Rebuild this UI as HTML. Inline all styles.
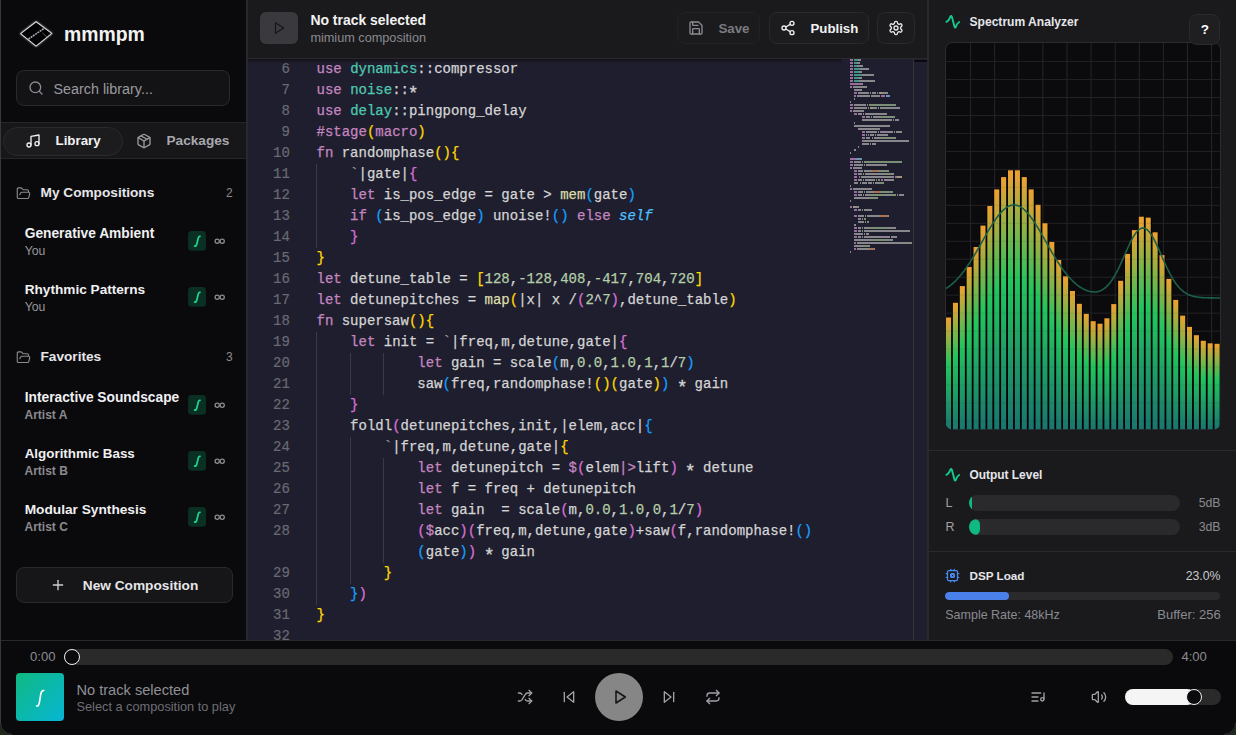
<!DOCTYPE html>
<html><head><meta charset="utf-8">
<style>
*{box-sizing:border-box;margin:0;padding:0}
html,body{width:1236px;height:735px;overflow:hidden;background:#0b0b0d;font-family:"Liberation Sans",sans-serif;}
.abs{position:absolute}
svg.i{position:absolute;fill:none;stroke:currentColor;stroke-width:2;stroke-linecap:round;stroke-linejoin:round}
#side{position:absolute;left:0;top:0;width:248px;height:640px;background:#0a0a0c;border-right:2px solid #29292c}
.t{position:absolute;white-space:nowrap;line-height:1}
#hdr{position:absolute;left:248px;top:0;width:680px;height:59px;background:#1a1a1c;border-bottom:1px solid #2a2a2d}
#code{position:absolute;left:248px;top:59px;width:680px;height:581px;background:#1e1e2e;overflow:hidden}
.ln{position:absolute;left:0;width:41.8px;text-align:right;font-family:"Liberation Mono",monospace;font-size:14px;line-height:21px;height:21px;color:#6a6a72;white-space:pre;-webkit-text-stroke:0.2px currentColor}
.cl{position:absolute;left:68.5px;font-family:"Liberation Mono",monospace;font-size:14px;line-height:21px;height:21px;color:#d4d4d4;white-space:pre;-webkit-text-stroke:0.25px currentColor}
.guide{position:absolute;width:1px;background:#3a3a46}
#right{position:absolute;left:928px;top:0;width:308px;height:640px;background:#1a1a1d}
#player{position:absolute;left:0;top:640px;width:1236px;height:95px;background:#0a0a0c;border-top:1px solid #2a2a2d}
.btn{position:absolute;border:1px solid #2a2a2d;border-radius:8px;background:#1c1c1f}
.badge{position:absolute;width:18px;height:20px;border-radius:4px;background:#0f3325;color:#22c55e;font-size:13px;text-align:center;line-height:20px;font-style:italic}
.inf{position:absolute;color:#8a8a8e;font-size:15px;line-height:1}
</style></head><body>

<!-- SIDEBAR -->
<div id="side">
  <svg class="abs" style="left:16px;top:16px" width="42" height="36" viewBox="16 16 42 36"><polygon points="20.6,33.6 36.1,21.8 51.8,33.4 36.1,46.1" fill="#000" stroke="#d8d8d8" stroke-width="1.1" stroke-linejoin="round" style="filter:drop-shadow(0 0 1px #999)"/><line x1="28.5" y1="39" x2="44.4" y2="28.2" stroke="#aab" stroke-width="1.6" stroke-dasharray="2 0.7"/><line x1="42.4" y1="32.9" x2="46.6" y2="36.6" stroke="#888" stroke-width="0.7"/></svg>
  <div class="t" style="left:64px;top:24.6px;font-size:19.4px;font-weight:bold;color:#f2f2f2">mmmpm</div>

  <div class="abs" style="left:16px;top:70px;width:214px;height:36px;border:1px solid #2a2a2d;border-radius:8px;background:#131315"></div>
  <svg class="i" style="left:28.3px;top:80.3px;color:#8c8a94" width="16" height="16" viewBox="0 0 24 24"><circle cx="11" cy="11" r="8"/><path d="m21 21-4.3-4.3"/></svg>
  <div class="t" style="left:53.5px;top:82.2px;font-size:14.35px;color:#9a9aa0">Search library...</div>

  <div class="abs" style="left:0;top:122px;width:246px;height:37px;background:#17171a;border-top:1px solid #26262a;border-bottom:1px solid #26262a"></div>
  <div class="abs" style="left:3px;top:127px;width:120px;height:29px;border:1px solid #2a2a2d;border-radius:15px;background:#1c1c1f"></div>
  <svg class="i" style="left:25px;top:133px;color:#f0f0f0" width="16" height="16" viewBox="0 0 24 24"><path d="M9 18V5l12-2v13"/><circle cx="6" cy="18" r="3"/><circle cx="18" cy="16" r="3"/></svg>
  <div class="t" style="left:55.5px;top:134.4px;font-size:13.33px;font-weight:bold;color:#f2f2f2">Library</div>
  <svg class="i" style="left:136px;top:133px;color:#9a9aa0" width="16" height="16" viewBox="0 0 24 24"><path d="M21 8a2 2 0 0 0-1-1.73l-7-4a2 2 0 0 0-2 0l-7 4A2 2 0 0 0 3 8v8a2 2 0 0 0 1 1.73l7 4a2 2 0 0 0 2 0l7-4A2 2 0 0 0 21 16Z"/><path d="m3.3 7 8.7 5 8.7-5"/><path d="M12 22V12"/><path d="m7.5 4.27 9 5.15"/></svg>
  <div class="t" style="left:166.5px;top:134.2px;font-size:13.63px;font-weight:bold;color:#a8a8ae">Packages</div>

  <svg class="i" style="left:16.2px;top:185.5px;color:#8a8a90;stroke-width:1.8" width="15" height="15" viewBox="0 0 24 24"><path d="m6 14 1.5-2.9A2 2 0 0 1 9.24 10H20a2 2 0 0 1 1.94 2.5l-1.54 6a2 2 0 0 1-1.95 1.5H4a2 2 0 0 1-2-2V5a2 2 0 0 1 2-2h3.9a2 2 0 0 1 1.69.9l.81 1.2a2 2 0 0 0 1.67.9H18a2 2 0 0 1 2 2v2"/></svg>
  <div class="t" style="left:40.5px;top:186.4px;font-size:13.66px;font-weight:bold;color:#e6e6ea">My Compositions</div>
  <div class="t" style="left:226px;top:187px;font-size:12px;color:#8a8a90">2</div>

  <div class="t" style="left:24.7px;top:226.8px;font-size:13.77px;font-weight:bold;color:#f0f0f2">Generative Ambient</div>
  <div class="t" style="left:24.7px;top:245.2px;font-size:12.27px;color:#96969c">You</div>
  <svg class="abs" style="left:186px;top:229px" width="42" height="24" viewBox="186 229 42 24"><rect x="188.1" y="231.1" width="17.9" height="19.6" rx="3.5" fill="#0a2f23"/><path d="M194.6 246.2 Q196.4 246.4 197.1 243 L198.2 238.2 Q198.7 236.2 200 236.4" fill="none" stroke="#1ed48f" stroke-width="1.7" stroke-linecap="round"/><circle cx="217.2" cy="241.2" r="2.1" fill="none" stroke="#8c8c92" stroke-width="1.25"/><circle cx="222.2" cy="241.2" r="2.1" fill="none" stroke="#8c8c92" stroke-width="1.25"/></svg>

  <div class="t" style="left:24.7px;top:282.8px;font-size:13.64px;font-weight:bold;color:#f0f0f2">Rhythmic Patterns</div>
  <div class="t" style="left:24.7px;top:301.2px;font-size:12.27px;color:#96969c">You</div>
  <svg class="abs" style="left:186px;top:285px" width="42" height="24" viewBox="186 229 42 24"><rect x="188.1" y="231.1" width="17.9" height="19.6" rx="3.5" fill="#0a2f23"/><path d="M194.6 246.2 Q196.4 246.4 197.1 243 L198.2 238.2 Q198.7 236.2 200 236.4" fill="none" stroke="#1ed48f" stroke-width="1.7" stroke-linecap="round"/><circle cx="217.2" cy="241.2" r="2.1" fill="none" stroke="#8c8c92" stroke-width="1.25"/><circle cx="222.2" cy="241.2" r="2.1" fill="none" stroke="#8c8c92" stroke-width="1.25"/></svg>

  <svg class="i" style="left:16.2px;top:349.5px;color:#8a8a90;stroke-width:1.8" width="15" height="15" viewBox="0 0 24 24"><path d="m6 14 1.5-2.9A2 2 0 0 1 9.24 10H20a2 2 0 0 1 1.94 2.5l-1.54 6a2 2 0 0 1-1.95 1.5H4a2 2 0 0 1-2-2V5a2 2 0 0 1 2-2h3.9a2 2 0 0 1 1.69.9l.81 1.2a2 2 0 0 0 1.67.9H18a2 2 0 0 1 2 2v2"/></svg>
  <div class="t" style="left:40.5px;top:350.4px;font-size:13.66px;font-weight:bold;color:#e6e6ea">Favorites</div>
  <div class="t" style="left:226px;top:351px;font-size:12px;color:#8a8a90">3</div>

  <div class="t" style="left:24.7px;top:390.8px;font-size:13.78px;font-weight:bold;color:#f0f0f2">Interactive Soundscape</div>
  <div class="t" style="left:24.5px;top:409.4px;font-size:12px;font-weight:bold;color:#8a8a90">Artist A</div>
  <svg class="abs" style="left:186px;top:393px" width="42" height="24" viewBox="186 229 42 24"><rect x="188.1" y="231.1" width="17.9" height="19.6" rx="3.5" fill="#0a2f23"/><path d="M194.6 246.2 Q196.4 246.4 197.1 243 L198.2 238.2 Q198.7 236.2 200 236.4" fill="none" stroke="#1ed48f" stroke-width="1.7" stroke-linecap="round"/><circle cx="217.2" cy="241.2" r="2.1" fill="none" stroke="#8c8c92" stroke-width="1.25"/><circle cx="222.2" cy="241.2" r="2.1" fill="none" stroke="#8c8c92" stroke-width="1.25"/></svg>

  <div class="t" style="left:24.7px;top:446.8px;font-size:13.4px;font-weight:bold;color:#f0f0f2">Algorithmic Bass</div>
  <div class="t" style="left:24.5px;top:465.4px;font-size:12px;font-weight:bold;color:#8a8a90">Artist B</div>
  <svg class="abs" style="left:186px;top:449px" width="42" height="24" viewBox="186 229 42 24"><rect x="188.1" y="231.1" width="17.9" height="19.6" rx="3.5" fill="#0a2f23"/><path d="M194.6 246.2 Q196.4 246.4 197.1 243 L198.2 238.2 Q198.7 236.2 200 236.4" fill="none" stroke="#1ed48f" stroke-width="1.7" stroke-linecap="round"/><circle cx="217.2" cy="241.2" r="2.1" fill="none" stroke="#8c8c92" stroke-width="1.25"/><circle cx="222.2" cy="241.2" r="2.1" fill="none" stroke="#8c8c92" stroke-width="1.25"/></svg>

  <div class="t" style="left:24.7px;top:502.8px;font-size:13.69px;font-weight:bold;color:#f0f0f2">Modular Synthesis</div>
  <div class="t" style="left:24.5px;top:521.4px;font-size:12px;font-weight:bold;color:#8a8a90">Artist C</div>
  <svg class="abs" style="left:186px;top:505px" width="42" height="24" viewBox="186 229 42 24"><rect x="188.1" y="231.1" width="17.9" height="19.6" rx="3.5" fill="#0a2f23"/><path d="M194.6 246.2 Q196.4 246.4 197.1 243 L198.2 238.2 Q198.7 236.2 200 236.4" fill="none" stroke="#1ed48f" stroke-width="1.7" stroke-linecap="round"/><circle cx="217.2" cy="241.2" r="2.1" fill="none" stroke="#8c8c92" stroke-width="1.25"/><circle cx="222.2" cy="241.2" r="2.1" fill="none" stroke="#8c8c92" stroke-width="1.25"/></svg>

  <div class="abs" style="left:16px;top:567px;width:217px;height:36px;border:1px solid #2a2a2d;border-radius:8px;background:#161618"></div>
  <svg class="i" style="left:50px;top:577px;color:#d0d0d4" width="16" height="16" viewBox="0 0 24 24"><path d="M5 12h14"/><path d="M12 5v14"/></svg>
  <div class="t" style="left:82.8px;top:578.8px;font-size:13.68px;font-weight:bold;color:#e6e6ea">New Composition</div>
</div>

<!-- HEADER -->
<div id="hdr">
  <div class="abs" style="left:12px;top:12px;width:38px;height:32px;border-radius:6px;background:#3a3a3e"></div>
  <svg class="i" style="left:24px;top:21px;color:#151517" width="14" height="14" viewBox="0 0 24 24"><polygon points="6 3 20 12 6 21 6 3"/></svg>
  <div class="t" style="left:62.4px;top:14px;font-size:13.96px;font-weight:bold;color:#f2f2f2">No track selected</div>
  <div class="t" style="left:62.4px;top:31.7px;font-size:12.69px;color:#8a8a90">mimium composition</div>

  <div class="btn" style="left:429px;top:12px;width:83px;height:32px;opacity:0.5"></div>
  <svg class="i" style="left:440px;top:20px;color:#8a8a90" width="16" height="16" viewBox="0 0 24 24"><path d="M15.2 3a2 2 0 0 1 1.4.6l3.8 3.8a2 2 0 0 1 .6 1.4V19a2 2 0 0 1-2 2H5a2 2 0 0 1-2-2V5a2 2 0 0 1 2-2z"/><path d="M17 21v-7a1 1 0 0 0-1-1H8a1 1 0 0 0-1 1v7"/><path d="M7 3v4a1 1 0 0 0 1 1h7"/></svg>
  <div class="t" style="left:470.4px;top:21.8px;font-size:13.32px;font-weight:bold;color:#7a7a80">Save</div>

  <div class="btn" style="left:521px;top:12px;width:100px;height:32px"></div>
  <svg class="i" style="left:532px;top:20px;color:#f0f0f0" width="16" height="16" viewBox="0 0 24 24"><circle cx="18" cy="5" r="3"/><circle cx="6" cy="12" r="3"/><circle cx="18" cy="19" r="3"/><line x1="8.59" x2="15.42" y1="13.51" y2="17.49"/><line x1="15.41" x2="8.59" y1="6.51" y2="10.49"/></svg>
  <div class="t" style="left:562.5px;top:21.8px;font-size:13.24px;font-weight:bold;color:#f2f2f2">Publish</div>

  <div class="btn" style="left:629px;top:12px;width:38px;height:32px"></div>
  <svg class="i" style="left:640px;top:20px;color:#e8e8ea" width="16" height="16" viewBox="0 0 24 24"><path d="M12.22 2h-.44a2 2 0 0 0-2 2v.18a2 2 0 0 1-1 1.73l-.43.25a2 2 0 0 1-2 0l-.15-.08a2 2 0 0 0-2.73.73l-.22.38a2 2 0 0 0 .73 2.73l.15.1a2 2 0 0 1 1 1.72v.51a2 2 0 0 1-1 1.74l-.15.09a2 2 0 0 0-.73 2.730l.22.38a2 2 0 0 0 2.73.73l.15-.08a2 2 0 0 1 2 0l.43.25a2 2 0 0 1 1 1.73V20a2 2 0 0 0 2 2h.44a2 2 0 0 0 2-2v-.18a2 2 0 0 1 1-1.73l.43-.25a2 2 0 0 1 2 0l.15.08a2 2 0 0 0 2.73-.73l.22-.39a2 2 0 0 0-.73-2.73l-.15-.08a2 2 0 0 1-1-1.74v-.5a2 2 0 0 1 1-1.74l.15-.09a2 2 0 0 0 .73-2.73l-.22-.38a2 2 0 0 0-2.73-.73l-.15.08a2 2 0 0 1-2 0l-.43-.25a2 2 0 0 1-1-1.73V4a2 2 0 0 0-2-2z"/><circle cx="12" cy="12" r="3"/></svg>
</div>

<!-- CODE -->
<div id="code">
  <div style="position:absolute;left:0;top:-59px;width:680px;height:640px">
<div class="ln" style="top:58.5px">6</div><div class="cl" style="top:58.5px"><span style="color:#c586c0">use</span><span style="color:#d4d4d4"> </span><span style="color:#4ec9b0">dynamics</span><span style="color:#d4d4d4">::compressor</span></div>
<div class="ln" style="top:79.5px">7</div><div class="cl" style="top:79.5px"><span style="color:#c586c0">use</span><span style="color:#d4d4d4"> </span><span style="color:#4ec9b0">noise</span><span style="color:#d4d4d4">::<span style="display:inline-block;transform:translateY(4px) scale(1.3)">*</span></span></div>
<div class="ln" style="top:100.5px">8</div><div class="cl" style="top:100.5px"><span style="color:#c586c0">use</span><span style="color:#d4d4d4"> </span><span style="color:#4ec9b0">delay</span><span style="color:#d4d4d4">::pingpong_delay</span></div>
<div class="ln" style="top:121.5px">9</div><div class="cl" style="top:121.5px"><span style="color:#c586c0">#stage</span><span style="color:#ffd700">(</span><span style="color:#c586c0">macro</span><span style="color:#ffd700">)</span></div>
<div class="ln" style="top:142.5px">10</div><div class="cl" style="top:142.5px"><span style="color:#c586c0">fn</span><span style="color:#d4d4d4"> randomphase</span><span style="color:#ffd700">()</span><span style="color:#ffd700">{</span></div>
<div class="ln" style="top:163.5px">11</div><div class="cl" style="top:163.5px"><span style="color:#d4d4d4">    </span><span style="color:#9a9a9a">`</span><span style="color:#d4d4d4">|gate|</span><span style="color:#da70d6">{</span></div>
<div class="ln" style="top:184.5px">12</div><div class="cl" style="top:184.5px"><span style="color:#d4d4d4">    </span><span style="color:#c586c0">let</span><span style="color:#d4d4d4"> is_pos_edge = gate &gt; </span><span style="color:#dcdcaa">mem</span><span style="color:#179fff">(</span><span style="color:#d4d4d4">gate</span><span style="color:#179fff">)</span></div>
<div class="ln" style="top:205.5px">13</div><div class="cl" style="top:205.5px"><span style="color:#d4d4d4">    </span><span style="color:#c586c0">if</span><span style="color:#d4d4d4"> </span><span style="color:#179fff">(</span><span style="color:#d4d4d4">is_pos_edge</span><span style="color:#179fff">)</span><span style="color:#d4d4d4"> unoise!</span><span style="color:#179fff">()</span><span style="color:#d4d4d4"> </span><span style="color:#c586c0">else</span><span style="color:#d4d4d4"> </span><span style="color:#4fc1ff;font-style:italic">self</span></div>
<div class="ln" style="top:226.5px">14</div><div class="cl" style="top:226.5px"><span style="color:#d4d4d4">    </span><span style="color:#da70d6">}</span></div>
<div class="ln" style="top:247.5px">15</div><div class="cl" style="top:247.5px"><span style="color:#ffd700">}</span></div>
<div class="ln" style="top:268.5px">16</div><div class="cl" style="top:268.5px"><span style="color:#c586c0">let</span><span style="color:#d4d4d4"> detune_table = </span><span style="color:#ffd700">[</span><span style="color:#b5cea8">128</span><span style="color:#d4d4d4">,</span><span style="color:#b5cea8">-128</span><span style="color:#d4d4d4">,</span><span style="color:#b5cea8">408</span><span style="color:#d4d4d4">,</span><span style="color:#b5cea8">-417</span><span style="color:#d4d4d4">,</span><span style="color:#b5cea8">704</span><span style="color:#d4d4d4">,</span><span style="color:#b5cea8">720</span><span style="color:#ffd700">]</span></div>
<div class="ln" style="top:289.5px">17</div><div class="cl" style="top:289.5px"><span style="color:#c586c0">let</span><span style="color:#d4d4d4"> detunepitches = </span><span style="color:#dcdcaa">map</span><span style="color:#ffd700">(</span><span style="color:#d4d4d4">|x| x /</span><span style="color:#da70d6">(</span><span style="color:#b5cea8">2</span><span style="color:#d4d4d4">^</span><span style="color:#b5cea8">7</span><span style="color:#da70d6">)</span><span style="color:#d4d4d4">,detune_table</span><span style="color:#ffd700">)</span></div>
<div class="ln" style="top:310.5px">18</div><div class="cl" style="top:310.5px"><span style="color:#c586c0">fn</span><span style="color:#d4d4d4"> supersaw</span><span style="color:#ffd700">()</span><span style="color:#ffd700">{</span></div>
<div class="ln" style="top:331.5px">19</div><div class="cl" style="top:331.5px"><span style="color:#d4d4d4">    </span><span style="color:#c586c0">let</span><span style="color:#d4d4d4"> init = </span><span style="color:#9a9a9a">`</span><span style="color:#d4d4d4">|freq,m,detune,gate|</span><span style="color:#da70d6">{</span></div>
<div class="ln" style="top:352.5px">20</div><div class="cl" style="top:352.5px"><span style="color:#d4d4d4">            </span><span style="color:#c586c0">let</span><span style="color:#d4d4d4"> gain = scale</span><span style="color:#179fff">(</span><span style="color:#d4d4d4">m,</span><span style="color:#b5cea8">0.0</span><span style="color:#d4d4d4">,</span><span style="color:#b5cea8">1.0</span><span style="color:#d4d4d4">,</span><span style="color:#b5cea8">1</span><span style="color:#d4d4d4">,</span><span style="color:#b5cea8">1</span><span style="color:#d4d4d4">/</span><span style="color:#b5cea8">7</span><span style="color:#179fff">)</span></div>
<div class="ln" style="top:373.5px">21</div><div class="cl" style="top:373.5px"><span style="color:#d4d4d4">            saw</span><span style="color:#179fff">(</span><span style="color:#d4d4d4">freq,randomphase!</span><span style="color:#ffd700">()</span><span style="color:#ffd700">(</span><span style="color:#d4d4d4">gate</span><span style="color:#ffd700">)</span><span style="color:#179fff">)</span><span style="color:#d4d4d4"> <span style="display:inline-block;transform:translateY(4px) scale(1.3)">*</span> gain</span></div>
<div class="ln" style="top:394.5px">22</div><div class="cl" style="top:394.5px"><span style="color:#d4d4d4">    </span><span style="color:#da70d6">}</span></div>
<div class="ln" style="top:415.5px">23</div><div class="cl" style="top:415.5px"><span style="color:#d4d4d4">    foldl</span><span style="color:#da70d6">(</span><span style="color:#d4d4d4">detunepitches,init,|elem,acc|</span><span style="color:#179fff">{</span></div>
<div class="ln" style="top:436.5px">24</div><div class="cl" style="top:436.5px"><span style="color:#d4d4d4">        </span><span style="color:#9a9a9a">`</span><span style="color:#d4d4d4">|freq,m,detune,gate|</span><span style="color:#ffd700">{</span></div>
<div class="ln" style="top:457.5px">25</div><div class="cl" style="top:457.5px"><span style="color:#d4d4d4">            </span><span style="color:#c586c0">let</span><span style="color:#d4d4d4"> detunepitch = </span><span style="color:#c586c0">$</span><span style="color:#da70d6">(</span><span style="color:#d4d4d4">elem</span><span style="color:#c586c0">|&gt;</span><span style="color:#d4d4d4">lift</span><span style="color:#da70d6">)</span><span style="color:#d4d4d4"> <span style="display:inline-block;transform:translateY(4px) scale(1.3)">*</span> detune</span></div>
<div class="ln" style="top:478.5px">26</div><div class="cl" style="top:478.5px"><span style="color:#d4d4d4">            </span><span style="color:#c586c0">let</span><span style="color:#d4d4d4"> f = freq + detunepitch</span></div>
<div class="ln" style="top:499.5px">27</div><div class="cl" style="top:499.5px"><span style="color:#d4d4d4">            </span><span style="color:#c586c0">let</span><span style="color:#d4d4d4"> gain  = scale</span><span style="color:#da70d6">(</span><span style="color:#d4d4d4">m,</span><span style="color:#b5cea8">0.0</span><span style="color:#d4d4d4">,</span><span style="color:#b5cea8">1.0</span><span style="color:#d4d4d4">,</span><span style="color:#b5cea8">0</span><span style="color:#d4d4d4">,</span><span style="color:#b5cea8">1</span><span style="color:#d4d4d4">/</span><span style="color:#b5cea8">7</span><span style="color:#da70d6">)</span></div>
<div class="ln" style="top:520.5px">28</div><div class="cl" style="top:520.5px"><span style="color:#d4d4d4">            </span><span style="color:#da70d6">(</span><span style="color:#c586c0">$</span><span style="color:#d4d4d4">acc</span><span style="color:#da70d6">)</span><span style="color:#da70d6">(</span><span style="color:#d4d4d4">freq,m,detune,gate</span><span style="color:#da70d6">)</span><span style="color:#d4d4d4">+saw</span><span style="color:#da70d6">(</span><span style="color:#d4d4d4">f,randomphase!</span><span style="color:#179fff">()</span></div>
<div class="ln" style="top:541.5px"></div><div class="cl" style="top:541.5px"><span style="color:#d4d4d4">            </span><span style="color:#179fff">(</span><span style="color:#d4d4d4">gate</span><span style="color:#179fff">)</span><span style="color:#da70d6">)</span><span style="color:#d4d4d4"> <span style="display:inline-block;transform:translateY(4px) scale(1.3)">*</span> gain</span></div>
<div class="ln" style="top:562.5px">29</div><div class="cl" style="top:562.5px"><span style="color:#d4d4d4">        </span><span style="color:#ffd700">}</span></div>
<div class="ln" style="top:583.5px">30</div><div class="cl" style="top:583.5px"><span style="color:#d4d4d4">    </span><span style="color:#179fff">}</span><span style="color:#da70d6">)</span></div>
<div class="ln" style="top:604.5px">31</div><div class="cl" style="top:604.5px"><span style="color:#ffd700">}</span></div>
<div class="ln" style="top:625.5px">32</div><div class="cl" style="top:625.5px"></div>
  <div class="guide" style="left:68px;top:163.5px;height:84px"></div>
  <div class="guide" style="left:68px;top:331.5px;height:273px"></div>
  <div class="guide" style="left:102px;top:352.5px;height:42px"></div>
  <div class="guide" style="left:135px;top:352.5px;height:42px"></div>
  <div class="guide" style="left:102px;top:436.5px;height:147px"></div>
  <div class="guide" style="left:135px;top:457.5px;height:105px"></div>
  </div>
  <div class="abs" style="left:0;top:0;width:594px;height:5px;background:linear-gradient(#13121b,rgba(30,30,46,0))"></div>
  <div class="abs" style="left:665px;top:0;width:1px;height:582px;background:#34343f"></div>
  <div class="abs" style="left:666px;top:1px;width:13px;height:2px;background:#0a0a0e"></div>
<svg width="70" height="200" style="position:absolute;left:602px;top:0px" viewBox="0 0 70 200">
<rect x="0" y="0" width="3" height="2" fill="#9a6fa0"/>
<rect x="4" y="0" width="4" height="2" fill="#3f9484"/>
<rect x="8" y="0" width="3" height="2" fill="#88888c"/>
<rect x="0" y="3" width="3" height="2" fill="#9a6fa0"/>
<rect x="4" y="3" width="3" height="2" fill="#3f9484"/>
<rect x="7" y="3" width="3" height="2" fill="#88888c"/>
<rect x="0" y="6" width="3" height="2" fill="#9a6fa0"/>
<rect x="4" y="6" width="3" height="2" fill="#3f9484"/>
<rect x="7" y="6" width="6" height="2" fill="#88888c"/>
<rect x="0" y="9" width="3" height="2" fill="#9a6fa0"/>
<rect x="4" y="9" width="6" height="2" fill="#3f9484"/>
<rect x="10" y="9" width="9" height="2" fill="#88888c"/>
<rect x="0" y="12" width="3" height="2" fill="#9a6fa0"/>
<rect x="4" y="12" width="5" height="2" fill="#3f9484"/>
<rect x="9" y="12" width="3" height="2" fill="#88888c"/>
<rect x="0" y="15" width="3" height="2" fill="#9a6fa0"/>
<rect x="4" y="15" width="8" height="2" fill="#3f9484"/>
<rect x="12" y="15" width="12" height="2" fill="#88888c"/>
<rect x="0" y="18" width="3" height="2" fill="#9a6fa0"/>
<rect x="4" y="18" width="5" height="2" fill="#3f9484"/>
<rect x="9" y="18" width="3" height="2" fill="#88888c"/>
<rect x="0" y="21" width="3" height="2" fill="#9a6fa0"/>
<rect x="4" y="21" width="5" height="2" fill="#3f9484"/>
<rect x="9" y="21" width="16" height="2" fill="#88888c"/>
<rect x="0" y="24" width="6" height="2" fill="#9a6fa0"/>
<rect x="6" y="24" width="1" height="2" fill="#88888c"/>
<rect x="7" y="24" width="5" height="2" fill="#9a6fa0"/>
<rect x="12" y="24" width="1" height="2" fill="#88888c"/>
<rect x="0" y="27" width="2" height="2" fill="#9a6fa0"/>
<rect x="3" y="27" width="14" height="2" fill="#88888c"/>
<rect x="4" y="30" width="1" height="2" fill="#9a6fa0"/>
<rect x="5" y="30" width="7" height="2" fill="#88888c"/>
<rect x="4" y="33" width="3" height="2" fill="#9a6fa0"/>
<rect x="8" y="33" width="11" height="2" fill="#88888c"/>
<rect x="20" y="33" width="1" height="2" fill="#88888c"/>
<rect x="22" y="33" width="4" height="2" fill="#88888c"/>
<rect x="27" y="33" width="1" height="2" fill="#88888c"/>
<rect x="29" y="33" width="3" height="2" fill="#9c9c70"/>
<rect x="32" y="33" width="6" height="2" fill="#88888c"/>
<rect x="4" y="36" width="2" height="2" fill="#9a6fa0"/>
<rect x="7" y="36" width="13" height="2" fill="#88888c"/>
<rect x="21" y="36" width="9" height="2" fill="#88888c"/>
<rect x="31" y="36" width="4" height="2" fill="#9a6fa0"/>
<rect x="36" y="36" width="4" height="2" fill="#6896c0"/>
<rect x="4" y="39" width="1" height="2" fill="#88888c"/>
<rect x="0" y="42" width="1" height="2" fill="#88888c"/>
<rect x="0" y="45" width="3" height="2" fill="#9a6fa0"/>
<rect x="4" y="45" width="12" height="2" fill="#88888c"/>
<rect x="17" y="45" width="1" height="2" fill="#88888c"/>
<rect x="19" y="45" width="1" height="2" fill="#88888c"/>
<rect x="20" y="45" width="3" height="2" fill="#76906e"/>
<rect x="23" y="45" width="1" height="2" fill="#88888c"/>
<rect x="24" y="45" width="4" height="2" fill="#76906e"/>
<rect x="28" y="45" width="1" height="2" fill="#88888c"/>
<rect x="29" y="45" width="3" height="2" fill="#76906e"/>
<rect x="32" y="45" width="1" height="2" fill="#88888c"/>
<rect x="33" y="45" width="4" height="2" fill="#76906e"/>
<rect x="37" y="45" width="1" height="2" fill="#88888c"/>
<rect x="38" y="45" width="3" height="2" fill="#76906e"/>
<rect x="41" y="45" width="1" height="2" fill="#88888c"/>
<rect x="42" y="45" width="3" height="2" fill="#76906e"/>
<rect x="45" y="45" width="1" height="2" fill="#88888c"/>
<rect x="0" y="48" width="3" height="2" fill="#9a6fa0"/>
<rect x="4" y="48" width="13" height="2" fill="#88888c"/>
<rect x="18" y="48" width="1" height="2" fill="#88888c"/>
<rect x="20" y="48" width="3" height="2" fill="#9c9c70"/>
<rect x="23" y="48" width="4" height="2" fill="#88888c"/>
<rect x="28" y="48" width="1" height="2" fill="#88888c"/>
<rect x="30" y="48" width="2" height="2" fill="#88888c"/>
<rect x="32" y="48" width="1" height="2" fill="#76906e"/>
<rect x="33" y="48" width="1" height="2" fill="#88888c"/>
<rect x="34" y="48" width="1" height="2" fill="#76906e"/>
<rect x="35" y="48" width="15" height="2" fill="#88888c"/>
<rect x="0" y="51" width="2" height="2" fill="#9a6fa0"/>
<rect x="3" y="51" width="11" height="2" fill="#88888c"/>
<rect x="4" y="54" width="3" height="2" fill="#9a6fa0"/>
<rect x="8" y="54" width="4" height="2" fill="#88888c"/>
<rect x="13" y="54" width="1" height="2" fill="#88888c"/>
<rect x="15" y="54" width="1" height="2" fill="#9a6fa0"/>
<rect x="16" y="54" width="21" height="2" fill="#88888c"/>
<rect x="12" y="57" width="3" height="2" fill="#9a6fa0"/>
<rect x="16" y="57" width="4" height="2" fill="#88888c"/>
<rect x="21" y="57" width="1" height="2" fill="#88888c"/>
<rect x="23" y="57" width="8" height="2" fill="#88888c"/>
<rect x="31" y="57" width="3" height="2" fill="#76906e"/>
<rect x="34" y="57" width="1" height="2" fill="#88888c"/>
<rect x="35" y="57" width="3" height="2" fill="#76906e"/>
<rect x="38" y="57" width="1" height="2" fill="#88888c"/>
<rect x="39" y="57" width="1" height="2" fill="#76906e"/>
<rect x="40" y="57" width="1" height="2" fill="#88888c"/>
<rect x="41" y="57" width="1" height="2" fill="#76906e"/>
<rect x="42" y="57" width="1" height="2" fill="#88888c"/>
<rect x="43" y="57" width="1" height="2" fill="#76906e"/>
<rect x="44" y="57" width="1" height="2" fill="#88888c"/>
<rect x="12" y="60" width="30" height="2" fill="#88888c"/>
<rect x="43" y="60" width="1" height="2" fill="#88888c"/>
<rect x="45" y="60" width="4" height="2" fill="#88888c"/>
<rect x="4" y="63" width="1" height="2" fill="#88888c"/>
<rect x="4" y="66" width="36" height="2" fill="#88888c"/>
<rect x="8" y="69" width="1" height="2" fill="#9a6fa0"/>
<rect x="9" y="69" width="21" height="2" fill="#88888c"/>
<rect x="12" y="72" width="3" height="2" fill="#9a6fa0"/>
<rect x="16" y="72" width="11" height="2" fill="#88888c"/>
<rect x="28" y="72" width="1" height="2" fill="#88888c"/>
<rect x="30" y="72" width="1" height="2" fill="#9a6fa0"/>
<rect x="31" y="72" width="5" height="2" fill="#88888c"/>
<rect x="36" y="72" width="2" height="2" fill="#9a6fa0"/>
<rect x="38" y="72" width="5" height="2" fill="#88888c"/>
<rect x="44" y="72" width="1" height="2" fill="#88888c"/>
<rect x="46" y="72" width="6" height="2" fill="#88888c"/>
<rect x="12" y="75" width="3" height="2" fill="#9a6fa0"/>
<rect x="16" y="75" width="1" height="2" fill="#88888c"/>
<rect x="18" y="75" width="1" height="2" fill="#88888c"/>
<rect x="20" y="75" width="4" height="2" fill="#88888c"/>
<rect x="25" y="75" width="1" height="2" fill="#88888c"/>
<rect x="27" y="75" width="11" height="2" fill="#88888c"/>
<rect x="12" y="78" width="3" height="2" fill="#9a6fa0"/>
<rect x="16" y="78" width="4" height="2" fill="#88888c"/>
<rect x="22" y="78" width="1" height="2" fill="#88888c"/>
<rect x="24" y="78" width="8" height="2" fill="#88888c"/>
<rect x="32" y="78" width="3" height="2" fill="#76906e"/>
<rect x="35" y="78" width="1" height="2" fill="#88888c"/>
<rect x="36" y="78" width="3" height="2" fill="#76906e"/>
<rect x="39" y="78" width="1" height="2" fill="#88888c"/>
<rect x="40" y="78" width="1" height="2" fill="#76906e"/>
<rect x="41" y="78" width="1" height="2" fill="#88888c"/>
<rect x="42" y="78" width="1" height="2" fill="#76906e"/>
<rect x="43" y="78" width="1" height="2" fill="#88888c"/>
<rect x="44" y="78" width="1" height="2" fill="#76906e"/>
<rect x="45" y="78" width="1" height="2" fill="#88888c"/>
<rect x="12" y="81" width="1" height="2" fill="#88888c"/>
<rect x="13" y="81" width="1" height="2" fill="#9a6fa0"/>
<rect x="14" y="81" width="45" height="2" fill="#88888c"/>
<rect x="12" y="84" width="7" height="2" fill="#88888c"/>
<rect x="20" y="84" width="1" height="2" fill="#88888c"/>
<rect x="22" y="84" width="4" height="2" fill="#88888c"/>
<rect x="8" y="87" width="1" height="2" fill="#88888c"/>
<rect x="4" y="90" width="2" height="2" fill="#88888c"/>
<rect x="0" y="93" width="1" height="2" fill="#88888c"/>
<rect x="0" y="99" width="6" height="2" fill="#9a6fa0"/>
<rect x="6" y="99" width="1" height="2" fill="#88888c"/>
<rect x="7" y="99" width="4" height="2" fill="#6896c0"/>
<rect x="11" y="99" width="1" height="2" fill="#88888c"/>
<rect x="0" y="102" width="3" height="2" fill="#9a6fa0"/>
<rect x="4" y="102" width="7" height="2" fill="#88888c"/>
<rect x="12" y="102" width="1" height="2" fill="#88888c"/>
<rect x="14" y="102" width="1" height="2" fill="#88888c"/>
<rect x="15" y="102" width="2" height="2" fill="#76906e"/>
<rect x="17" y="102" width="1" height="2" fill="#88888c"/>
<rect x="18" y="102" width="2" height="2" fill="#76906e"/>
<rect x="20" y="102" width="1" height="2" fill="#88888c"/>
<rect x="21" y="102" width="2" height="2" fill="#76906e"/>
<rect x="23" y="102" width="1" height="2" fill="#88888c"/>
<rect x="24" y="102" width="3" height="2" fill="#76906e"/>
<rect x="27" y="102" width="1" height="2" fill="#88888c"/>
<rect x="28" y="102" width="3" height="2" fill="#76906e"/>
<rect x="31" y="102" width="1" height="2" fill="#88888c"/>
<rect x="32" y="102" width="3" height="2" fill="#76906e"/>
<rect x="35" y="102" width="1" height="2" fill="#88888c"/>
<rect x="36" y="102" width="3" height="2" fill="#76906e"/>
<rect x="39" y="102" width="1" height="2" fill="#88888c"/>
<rect x="40" y="102" width="3" height="2" fill="#76906e"/>
<rect x="43" y="102" width="1" height="2" fill="#88888c"/>
<rect x="44" y="102" width="3" height="2" fill="#76906e"/>
<rect x="47" y="102" width="1" height="2" fill="#88888c"/>
<rect x="48" y="102" width="3" height="2" fill="#76906e"/>
<rect x="51" y="102" width="1" height="2" fill="#88888c"/>
<rect x="0" y="105" width="3" height="2" fill="#9a6fa0"/>
<rect x="4" y="105" width="9" height="2" fill="#88888c"/>
<rect x="14" y="105" width="1" height="2" fill="#88888c"/>
<rect x="16" y="105" width="21" height="2" fill="#88888c"/>
<rect x="0" y="108" width="2" height="2" fill="#9a6fa0"/>
<rect x="3" y="108" width="9" height="2" fill="#88888c"/>
<rect x="4" y="111" width="3" height="2" fill="#9a6fa0"/>
<rect x="8" y="111" width="5" height="2" fill="#88888c"/>
<rect x="14" y="111" width="1" height="2" fill="#88888c"/>
<rect x="15" y="111" width="7" height="2" fill="#88888c"/>
<rect x="22" y="111" width="6" height="2" fill="#a8704e"/>
<rect x="28" y="111" width="1" height="2" fill="#88888c"/>
<rect x="29" y="111" width="4" height="2" fill="#76906e"/>
<rect x="33" y="111" width="1" height="2" fill="#88888c"/>
<rect x="34" y="111" width="3" height="2" fill="#76906e"/>
<rect x="37" y="111" width="2" height="2" fill="#88888c"/>
<rect x="4" y="114" width="3" height="2" fill="#9a6fa0"/>
<rect x="8" y="114" width="4" height="2" fill="#88888c"/>
<rect x="13" y="114" width="1" height="2" fill="#88888c"/>
<rect x="15" y="114" width="19" height="2" fill="#88888c"/>
<rect x="34" y="114" width="3" height="2" fill="#76906e"/>
<rect x="37" y="114" width="1" height="2" fill="#88888c"/>
<rect x="38" y="114" width="1" height="2" fill="#76906e"/>
<rect x="39" y="114" width="1" height="2" fill="#88888c"/>
<rect x="40" y="114" width="1" height="2" fill="#76906e"/>
<rect x="41" y="114" width="3" height="2" fill="#88888c"/>
<rect x="4" y="117" width="3" height="2" fill="#9a6fa0"/>
<rect x="9" y="117" width="1" height="2" fill="#88888c"/>
<rect x="11" y="117" width="25" height="2" fill="#88888c"/>
<rect x="36" y="117" width="1" height="2" fill="#76906e"/>
<rect x="37" y="117" width="7" height="2" fill="#88888c"/>
<rect x="45" y="117" width="2" height="2" fill="#9a6fa0"/>
<rect x="47" y="117" width="5" height="2" fill="#9c9c70"/>
<rect x="4" y="120" width="3" height="2" fill="#9a6fa0"/>
<rect x="8" y="120" width="4" height="2" fill="#88888c"/>
<rect x="13" y="120" width="1" height="2" fill="#88888c"/>
<rect x="15" y="120" width="10" height="2" fill="#88888c"/>
<rect x="26" y="120" width="1" height="2" fill="#88888c"/>
<rect x="28" y="120" width="2" height="2" fill="#76906e"/>
<rect x="31" y="120" width="2" height="2" fill="#9a6fa0"/>
<rect x="34" y="120" width="10" height="2" fill="#88888c"/>
<rect x="4" y="123" width="4" height="2" fill="#88888c"/>
<rect x="10" y="123" width="1" height="2" fill="#88888c"/>
<rect x="12" y="123" width="5" height="2" fill="#88888c"/>
<rect x="18" y="123" width="4" height="2" fill="#88888c"/>
<rect x="23" y="123" width="1" height="2" fill="#88888c"/>
<rect x="25" y="123" width="5" height="2" fill="#88888c"/>
<rect x="30" y="123" width="3" height="2" fill="#76906e"/>
<rect x="33" y="123" width="1" height="2" fill="#88888c"/>
<rect x="0" y="126" width="1" height="2" fill="#88888c"/>
<rect x="0" y="129" width="2" height="2" fill="#9a6fa0"/>
<rect x="3" y="129" width="19" height="2" fill="#88888c"/>
<rect x="4" y="132" width="3" height="2" fill="#9a6fa0"/>
<rect x="8" y="132" width="5" height="2" fill="#88888c"/>
<rect x="14" y="132" width="1" height="2" fill="#88888c"/>
<rect x="16" y="132" width="8" height="2" fill="#88888c"/>
<rect x="24" y="132" width="6" height="2" fill="#a8704e"/>
<rect x="30" y="132" width="1" height="2" fill="#88888c"/>
<rect x="31" y="132" width="4" height="2" fill="#76906e"/>
<rect x="35" y="132" width="1" height="2" fill="#88888c"/>
<rect x="36" y="132" width="1" height="2" fill="#76906e"/>
<rect x="37" y="132" width="1" height="2" fill="#88888c"/>
<rect x="38" y="132" width="4" height="2" fill="#76906e"/>
<rect x="42" y="132" width="1" height="2" fill="#88888c"/>
<rect x="4" y="135" width="3" height="2" fill="#9a6fa0"/>
<rect x="8" y="135" width="4" height="2" fill="#88888c"/>
<rect x="13" y="135" width="1" height="2" fill="#88888c"/>
<rect x="15" y="135" width="5" height="2" fill="#88888c"/>
<rect x="20" y="135" width="3" height="2" fill="#76906e"/>
<rect x="23" y="135" width="1" height="2" fill="#88888c"/>
<rect x="24" y="135" width="3" height="2" fill="#76906e"/>
<rect x="27" y="135" width="1" height="2" fill="#88888c"/>
<rect x="28" y="135" width="3" height="2" fill="#76906e"/>
<rect x="31" y="135" width="1" height="2" fill="#88888c"/>
<rect x="32" y="135" width="3" height="2" fill="#76906e"/>
<rect x="35" y="135" width="7" height="2" fill="#88888c"/>
<rect x="42" y="135" width="4" height="2" fill="#76906e"/>
<rect x="47" y="135" width="1" height="2" fill="#88888c"/>
<rect x="49" y="135" width="5" height="2" fill="#88888c"/>
<rect x="4" y="138" width="19" height="2" fill="#88888c"/>
<rect x="23" y="138" width="4" height="2" fill="#76906e"/>
<rect x="27" y="138" width="1" height="2" fill="#88888c"/>
<rect x="0" y="141" width="1" height="2" fill="#88888c"/>
<rect x="0" y="147" width="2" height="2" fill="#9a6fa0"/>
<rect x="3" y="147" width="2" height="2" fill="#9c9c70"/>
<rect x="5" y="147" width="4" height="2" fill="#88888c"/>
<rect x="4" y="150" width="3" height="2" fill="#9a6fa0"/>
<rect x="8" y="150" width="3" height="2" fill="#88888c"/>
<rect x="12" y="150" width="1" height="2" fill="#88888c"/>
<rect x="14" y="150" width="8" height="2" fill="#88888c"/>
<rect x="4" y="156" width="3" height="2" fill="#9a6fa0"/>
<rect x="8" y="156" width="6" height="2" fill="#88888c"/>
<rect x="15" y="156" width="1" height="2" fill="#88888c"/>
<rect x="17" y="156" width="13" height="2" fill="#88888c"/>
<rect x="30" y="156" width="7" height="2" fill="#a8704e"/>
<rect x="37" y="156" width="2" height="2" fill="#88888c"/>
<rect x="8" y="159" width="3" height="2" fill="#88888c"/>
<rect x="12" y="159" width="1" height="2" fill="#88888c"/>
<rect x="14" y="159" width="2" height="2" fill="#76906e"/>
<rect x="8" y="162" width="6" height="2" fill="#88888c"/>
<rect x="15" y="162" width="1" height="2" fill="#88888c"/>
<rect x="17" y="162" width="2" height="2" fill="#76906e"/>
<rect x="4" y="165" width="2" height="2" fill="#88888c"/>
<rect x="4" y="168" width="3" height="2" fill="#9a6fa0"/>
<rect x="8" y="168" width="3" height="2" fill="#88888c"/>
<rect x="12" y="168" width="1" height="2" fill="#88888c"/>
<rect x="14" y="168" width="5" height="2" fill="#88888c"/>
<rect x="19" y="168" width="5" height="2" fill="#76906e"/>
<rect x="24" y="168" width="1" height="2" fill="#88888c"/>
<rect x="25" y="168" width="3" height="2" fill="#76906e"/>
<rect x="28" y="168" width="1" height="2" fill="#88888c"/>
<rect x="29" y="168" width="3" height="2" fill="#76906e"/>
<rect x="32" y="168" width="1" height="2" fill="#88888c"/>
<rect x="33" y="168" width="3" height="2" fill="#76906e"/>
<rect x="36" y="168" width="10" height="2" fill="#88888c"/>
<rect x="4" y="171" width="3" height="2" fill="#9a6fa0"/>
<rect x="8" y="171" width="3" height="2" fill="#88888c"/>
<rect x="12" y="171" width="1" height="2" fill="#88888c"/>
<rect x="14" y="171" width="46" height="2" fill="#88888c"/>
<rect x="4" y="174" width="9" height="2" fill="#88888c"/>
<rect x="14" y="174" width="1" height="2" fill="#88888c"/>
<rect x="16" y="174" width="3" height="2" fill="#88888c"/>
<rect x="4" y="177" width="3" height="2" fill="#9a6fa0"/>
<rect x="8" y="177" width="3" height="2" fill="#88888c"/>
<rect x="12" y="177" width="1" height="2" fill="#88888c"/>
<rect x="14" y="177" width="20" height="2" fill="#88888c"/>
<rect x="34" y="177" width="2" height="2" fill="#9a6fa0"/>
<rect x="36" y="177" width="4" height="2" fill="#88888c"/>
<rect x="41" y="177" width="6" height="2" fill="#88888c"/>
<rect x="4" y="180" width="19" height="2" fill="#88888c"/>
<rect x="23" y="180" width="4" height="2" fill="#76906e"/>
<rect x="27" y="180" width="1" height="2" fill="#88888c"/>
<rect x="28" y="180" width="3" height="2" fill="#76906e"/>
<rect x="31" y="180" width="1" height="2" fill="#88888c"/>
<rect x="32" y="180" width="3" height="2" fill="#76906e"/>
<rect x="35" y="180" width="2" height="2" fill="#88888c"/>
<rect x="37" y="180" width="3" height="2" fill="#76906e"/>
<rect x="40" y="180" width="3" height="2" fill="#88888c"/>
<rect x="4" y="183" width="2" height="2" fill="#9a6fa0"/>
<rect x="7" y="183" width="11" height="2" fill="#88888c"/>
<rect x="18" y="183" width="1" height="2" fill="#9a6fa0"/>
<rect x="19" y="183" width="31" height="2" fill="#88888c"/>
<rect x="50" y="183" width="1" height="2" fill="#76906e"/>
<rect x="51" y="183" width="7" height="2" fill="#88888c"/>
<rect x="58" y="183" width="3" height="2" fill="#76906e"/>
<rect x="61" y="183" width="1" height="2" fill="#88888c"/>
<rect x="4" y="186" width="9" height="2" fill="#88888c"/>
<rect x="13" y="186" width="4" height="2" fill="#76906e"/>
<rect x="17" y="186" width="3" height="2" fill="#88888c"/>
<rect x="4" y="189" width="2" height="2" fill="#9a6fa0"/>
<rect x="7" y="189" width="12" height="2" fill="#88888c"/>
<rect x="19" y="189" width="5" height="2" fill="#a8704e"/>
<rect x="24" y="189" width="1" height="2" fill="#88888c"/>
<rect x="0" y="192" width="1" height="2" fill="#88888c"/>
</svg>
</div>

<!-- RIGHT PANEL -->
<div id="right">
  <svg class="i" style="left:14px;top:10px;color:#14c98c;stroke-width:1.9" width="20" height="22" viewBox="942 10 20 22"><path d="M946.3 21.8 Q948.8 21 950.6 16.2 Q951.2 15.4 951.8 16.6 L954.6 27 Q955.2 28.2 955.9 26.8 Q957 23 959.2 22"/></svg>
  <div class="t" style="left:41.5px;top:16.2px;font-size:12.08px;font-weight:bold;color:#e6e6ea">Spectrum Analyzer</div>
  <div class="btn" style="left:261px;top:14px;width:31px;height:31px;background:#1f1f22;z-index:2"></div>
  <div class="t" style="left:272.8px;top:23.4px;font-size:13.5px;font-weight:bold;color:#ffffff;z-index:3">?</div>

  <div class="abs" style="left:0;top:450px;width:308px;height:1px;background:#2a2a2d"></div>
  <svg class="i" style="left:14px;top:463px;color:#14c98c;stroke-width:1.9" width="20" height="22" viewBox="942 10 20 22"><path d="M946.3 21.8 Q948.8 21 950.6 16.2 Q951.2 15.4 951.8 16.6 L954.6 27 Q955.2 28.2 955.9 26.8 Q957 23 959.2 22"/></svg>
  <div class="t" style="left:41.4px;top:469.7px;font-size:11.95px;font-weight:bold;color:#e6e6ea">Output Level</div>
  <div class="t" style="left:17.5px;top:497.4px;font-size:12.5px;color:#a0a0a6">L</div>
  <div class="abs" style="left:41px;top:495px;width:211px;height:16px;border-radius:8px;background:#2a2a2d;overflow:hidden"><div style="width:3px;height:16px;background:#10b981;border-radius:8px 0 0 8px"></div></div>
  <div class="t" style="left:260px;top:496.6px;font-size:12.25px;color:#8a8a90;width:32.5px;text-align:right">5dB</div>
  <div class="t" style="left:17.5px;top:521.4px;font-size:12.5px;color:#a0a0a6">R</div>
  <div class="abs" style="left:41px;top:519px;width:211px;height:16px;border-radius:8px;background:#2a2a2d;overflow:hidden"><div style="width:11px;height:16px;background:#10b981;border-radius:8px"></div></div>
  <div class="t" style="left:260px;top:520.6px;font-size:12.25px;color:#8a8a90;width:32.5px;text-align:right">3dB</div>

  <div class="abs" style="left:0;top:551px;width:308px;height:1px;background:#2a2a2d"></div>
  <svg class="i" style="left:17px;top:567.5px;color:#4a8af0" width="15" height="15" viewBox="0 0 24 24"><rect width="16" height="16" x="4" y="4" rx="2"/><rect width="5" height="5" x="9.5" y="9.5" rx="1" stroke-width="3"/><path d="M15 2v2"/><path d="M15 20v2"/><path d="M2 15h2"/><path d="M2 9h2"/><path d="M20 15h2"/><path d="M20 9h2"/><path d="M9 2v2"/><path d="M9 20v2"/></svg>
  <div class="t" style="left:41.5px;top:569.6px;font-size:11.69px;font-weight:bold;color:#e6e6ea">DSP Load</div>
  <div class="t" style="left:230px;top:570px;font-size:12.27px;color:#c8c8cc;width:62.5px;text-align:right">23.0%</div>
  <div class="abs" style="left:17px;top:592px;width:275px;height:8px;border-radius:4px;background:#2a2a2d;overflow:hidden"><div style="width:64px;height:8px;background:#4a80ea;border-radius:4px"></div></div>
  <div class="t" style="left:17.3px;top:608.8px;font-size:12.49px;color:#8a8a90">Sample Rate: 48kHz</div>
  <div class="t" style="left:200px;top:608.4px;font-size:13px;color:#8a8a90;width:92.7px;text-align:right">Buffer: 256</div>
</div>
<div class="abs" style="left:927px;top:0;width:2px;height:640px;background:#29292c"></div>
<svg width="276" height="388" viewBox="945 42 276 388" style="position:absolute;left:945px;top:42px">
<defs><clipPath id="bx"><rect x="945.5" y="42.5" width="275" height="387" rx="7"/></clipPath>
<linearGradient id="g0" x1="0" y1="317.5" x2="0" y2="429.5" gradientUnits="userSpaceOnUse"><stop offset="0" stop-color="#f0a030"/><stop offset="0.42" stop-color="#22c55e"/><stop offset="1" stop-color="#1a7570"/></linearGradient>
<linearGradient id="g1" x1="0" y1="302.8" x2="0" y2="429.5" gradientUnits="userSpaceOnUse"><stop offset="0" stop-color="#f0a030"/><stop offset="0.42" stop-color="#22c55e"/><stop offset="1" stop-color="#1a7570"/></linearGradient>
<linearGradient id="g2" x1="0" y1="286.1" x2="0" y2="429.5" gradientUnits="userSpaceOnUse"><stop offset="0" stop-color="#f0a030"/><stop offset="0.42" stop-color="#22c55e"/><stop offset="1" stop-color="#1a7570"/></linearGradient>
<linearGradient id="g3" x1="0" y1="267" x2="0" y2="429.5" gradientUnits="userSpaceOnUse"><stop offset="0" stop-color="#f0a030"/><stop offset="0.42" stop-color="#22c55e"/><stop offset="1" stop-color="#1a7570"/></linearGradient>
<linearGradient id="g4" x1="0" y1="247" x2="0" y2="429.5" gradientUnits="userSpaceOnUse"><stop offset="0" stop-color="#f0a030"/><stop offset="0.42" stop-color="#22c55e"/><stop offset="1" stop-color="#1a7570"/></linearGradient>
<linearGradient id="g5" x1="0" y1="225.6" x2="0" y2="429.5" gradientUnits="userSpaceOnUse"><stop offset="0" stop-color="#f0a030"/><stop offset="0.42" stop-color="#22c55e"/><stop offset="1" stop-color="#1a7570"/></linearGradient>
<linearGradient id="g6" x1="0" y1="206" x2="0" y2="429.5" gradientUnits="userSpaceOnUse"><stop offset="0" stop-color="#f0a030"/><stop offset="0.42" stop-color="#22c55e"/><stop offset="1" stop-color="#1a7570"/></linearGradient>
<linearGradient id="g7" x1="0" y1="189.4" x2="0" y2="429.5" gradientUnits="userSpaceOnUse"><stop offset="0" stop-color="#f0a030"/><stop offset="0.42" stop-color="#22c55e"/><stop offset="1" stop-color="#1a7570"/></linearGradient>
<linearGradient id="g8" x1="0" y1="177.1" x2="0" y2="429.5" gradientUnits="userSpaceOnUse"><stop offset="0" stop-color="#f0a030"/><stop offset="0.42" stop-color="#22c55e"/><stop offset="1" stop-color="#1a7570"/></linearGradient>
<linearGradient id="g9" x1="0" y1="170.3" x2="0" y2="429.5" gradientUnits="userSpaceOnUse"><stop offset="0" stop-color="#f0a030"/><stop offset="0.42" stop-color="#22c55e"/><stop offset="1" stop-color="#1a7570"/></linearGradient>
<linearGradient id="g10" x1="0" y1="170.3" x2="0" y2="429.5" gradientUnits="userSpaceOnUse"><stop offset="0" stop-color="#f0a030"/><stop offset="0.42" stop-color="#22c55e"/><stop offset="1" stop-color="#1a7570"/></linearGradient>
<linearGradient id="g11" x1="0" y1="177.1" x2="0" y2="429.5" gradientUnits="userSpaceOnUse"><stop offset="0" stop-color="#f0a030"/><stop offset="0.42" stop-color="#22c55e"/><stop offset="1" stop-color="#1a7570"/></linearGradient>
<linearGradient id="g12" x1="0" y1="189.4" x2="0" y2="429.5" gradientUnits="userSpaceOnUse"><stop offset="0" stop-color="#f0a030"/><stop offset="0.42" stop-color="#22c55e"/><stop offset="1" stop-color="#1a7570"/></linearGradient>
<linearGradient id="g13" x1="0" y1="204.8" x2="0" y2="429.5" gradientUnits="userSpaceOnUse"><stop offset="0" stop-color="#f0a030"/><stop offset="0.42" stop-color="#22c55e"/><stop offset="1" stop-color="#1a7570"/></linearGradient>
<linearGradient id="g14" x1="0" y1="223.2" x2="0" y2="429.5" gradientUnits="userSpaceOnUse"><stop offset="0" stop-color="#f0a030"/><stop offset="0.42" stop-color="#22c55e"/><stop offset="1" stop-color="#1a7570"/></linearGradient>
<linearGradient id="g15" x1="0" y1="242" x2="0" y2="429.5" gradientUnits="userSpaceOnUse"><stop offset="0" stop-color="#f0a030"/><stop offset="0.42" stop-color="#22c55e"/><stop offset="1" stop-color="#1a7570"/></linearGradient>
<linearGradient id="g16" x1="0" y1="260" x2="0" y2="429.5" gradientUnits="userSpaceOnUse"><stop offset="0" stop-color="#f0a030"/><stop offset="0.42" stop-color="#22c55e"/><stop offset="1" stop-color="#1a7570"/></linearGradient>
<linearGradient id="g17" x1="0" y1="276.3" x2="0" y2="429.5" gradientUnits="userSpaceOnUse"><stop offset="0" stop-color="#f0a030"/><stop offset="0.42" stop-color="#22c55e"/><stop offset="1" stop-color="#1a7570"/></linearGradient>
<linearGradient id="g18" x1="0" y1="291" x2="0" y2="429.5" gradientUnits="userSpaceOnUse"><stop offset="0" stop-color="#f0a030"/><stop offset="0.42" stop-color="#22c55e"/><stop offset="1" stop-color="#1a7570"/></linearGradient>
<linearGradient id="g19" x1="0" y1="303.8" x2="0" y2="429.5" gradientUnits="userSpaceOnUse"><stop offset="0" stop-color="#f0a030"/><stop offset="0.42" stop-color="#22c55e"/><stop offset="1" stop-color="#1a7570"/></linearGradient>
<linearGradient id="g20" x1="0" y1="313.9" x2="0" y2="429.5" gradientUnits="userSpaceOnUse"><stop offset="0" stop-color="#f0a030"/><stop offset="0.42" stop-color="#22c55e"/><stop offset="1" stop-color="#1a7570"/></linearGradient>
<linearGradient id="g21" x1="0" y1="321.2" x2="0" y2="429.5" gradientUnits="userSpaceOnUse"><stop offset="0" stop-color="#f0a030"/><stop offset="0.42" stop-color="#22c55e"/><stop offset="1" stop-color="#1a7570"/></linearGradient>
<linearGradient id="g22" x1="0" y1="323.7" x2="0" y2="429.5" gradientUnits="userSpaceOnUse"><stop offset="0" stop-color="#f0a030"/><stop offset="0.42" stop-color="#22c55e"/><stop offset="1" stop-color="#1a7570"/></linearGradient>
<linearGradient id="g23" x1="0" y1="318.3" x2="0" y2="429.5" gradientUnits="userSpaceOnUse"><stop offset="0" stop-color="#f0a030"/><stop offset="0.42" stop-color="#22c55e"/><stop offset="1" stop-color="#1a7570"/></linearGradient>
<linearGradient id="g24" x1="0" y1="304.1" x2="0" y2="429.5" gradientUnits="userSpaceOnUse"><stop offset="0" stop-color="#f0a030"/><stop offset="0.42" stop-color="#22c55e"/><stop offset="1" stop-color="#1a7570"/></linearGradient>
<linearGradient id="g25" x1="0" y1="280.8" x2="0" y2="429.5" gradientUnits="userSpaceOnUse"><stop offset="0" stop-color="#f0a030"/><stop offset="0.42" stop-color="#22c55e"/><stop offset="1" stop-color="#1a7570"/></linearGradient>
<linearGradient id="g26" x1="0" y1="253.9" x2="0" y2="429.5" gradientUnits="userSpaceOnUse"><stop offset="0" stop-color="#f0a030"/><stop offset="0.42" stop-color="#22c55e"/><stop offset="1" stop-color="#1a7570"/></linearGradient>
<linearGradient id="g27" x1="0" y1="230.1" x2="0" y2="429.5" gradientUnits="userSpaceOnUse"><stop offset="0" stop-color="#f0a030"/><stop offset="0.42" stop-color="#22c55e"/><stop offset="1" stop-color="#1a7570"/></linearGradient>
<linearGradient id="g28" x1="0" y1="216.7" x2="0" y2="429.5" gradientUnits="userSpaceOnUse"><stop offset="0" stop-color="#f0a030"/><stop offset="0.42" stop-color="#22c55e"/><stop offset="1" stop-color="#1a7570"/></linearGradient>
<linearGradient id="g29" x1="0" y1="217.6" x2="0" y2="429.5" gradientUnits="userSpaceOnUse"><stop offset="0" stop-color="#f0a030"/><stop offset="0.42" stop-color="#22c55e"/><stop offset="1" stop-color="#1a7570"/></linearGradient>
<linearGradient id="g30" x1="0" y1="232.3" x2="0" y2="429.5" gradientUnits="userSpaceOnUse"><stop offset="0" stop-color="#f0a030"/><stop offset="0.42" stop-color="#22c55e"/><stop offset="1" stop-color="#1a7570"/></linearGradient>
<linearGradient id="g31" x1="0" y1="255.1" x2="0" y2="429.5" gradientUnits="userSpaceOnUse"><stop offset="0" stop-color="#f0a030"/><stop offset="0.42" stop-color="#22c55e"/><stop offset="1" stop-color="#1a7570"/></linearGradient>
<linearGradient id="g32" x1="0" y1="278.9" x2="0" y2="429.5" gradientUnits="userSpaceOnUse"><stop offset="0" stop-color="#f0a030"/><stop offset="0.42" stop-color="#22c55e"/><stop offset="1" stop-color="#1a7570"/></linearGradient>
<linearGradient id="g33" x1="0" y1="299.9" x2="0" y2="429.5" gradientUnits="userSpaceOnUse"><stop offset="0" stop-color="#f0a030"/><stop offset="0.42" stop-color="#22c55e"/><stop offset="1" stop-color="#1a7570"/></linearGradient>
<linearGradient id="g34" x1="0" y1="315.6" x2="0" y2="429.5" gradientUnits="userSpaceOnUse"><stop offset="0" stop-color="#f0a030"/><stop offset="0.42" stop-color="#22c55e"/><stop offset="1" stop-color="#1a7570"/></linearGradient>
<linearGradient id="g35" x1="0" y1="326.9" x2="0" y2="429.5" gradientUnits="userSpaceOnUse"><stop offset="0" stop-color="#f0a030"/><stop offset="0.42" stop-color="#22c55e"/><stop offset="1" stop-color="#1a7570"/></linearGradient>
<linearGradient id="g36" x1="0" y1="335.2" x2="0" y2="429.5" gradientUnits="userSpaceOnUse"><stop offset="0" stop-color="#f0a030"/><stop offset="0.42" stop-color="#22c55e"/><stop offset="1" stop-color="#1a7570"/></linearGradient>
<linearGradient id="g37" x1="0" y1="340.8" x2="0" y2="429.5" gradientUnits="userSpaceOnUse"><stop offset="0" stop-color="#f0a030"/><stop offset="0.42" stop-color="#22c55e"/><stop offset="1" stop-color="#1a7570"/></linearGradient>
<linearGradient id="g38" x1="0" y1="343.3" x2="0" y2="429.5" gradientUnits="userSpaceOnUse"><stop offset="0" stop-color="#f0a030"/><stop offset="0.42" stop-color="#22c55e"/><stop offset="1" stop-color="#1a7570"/></linearGradient>
<linearGradient id="g39" x1="0" y1="343.8" x2="0" y2="429.5" gradientUnits="userSpaceOnUse"><stop offset="0" stop-color="#f0a030"/><stop offset="0.42" stop-color="#22c55e"/><stop offset="1" stop-color="#1a7570"/></linearGradient>
</defs>
<rect x="945.5" y="42.5" width="275" height="387" rx="7" fill="#0b0b0d" stroke="#2c2c30" stroke-width="1"/>
<g clip-path="url(#bx)">
<line x1="970.6" y1="42" x2="970.6" y2="430" stroke="#26262a" stroke-width="1"/>
<line x1="994.7" y1="42" x2="994.7" y2="430" stroke="#26262a" stroke-width="1"/>
<line x1="1018.8" y1="42" x2="1018.8" y2="430" stroke="#26262a" stroke-width="1"/>
<line x1="1042.9" y1="42" x2="1042.9" y2="430" stroke="#26262a" stroke-width="1"/>
<line x1="1067.0" y1="42" x2="1067.0" y2="430" stroke="#26262a" stroke-width="1"/>
<line x1="1091.1" y1="42" x2="1091.1" y2="430" stroke="#26262a" stroke-width="1"/>
<line x1="1115.2" y1="42" x2="1115.2" y2="430" stroke="#26262a" stroke-width="1"/>
<line x1="1139.3" y1="42" x2="1139.3" y2="430" stroke="#26262a" stroke-width="1"/>
<line x1="1163.4" y1="42" x2="1163.4" y2="430" stroke="#26262a" stroke-width="1"/>
<line x1="1187.5" y1="42" x2="1187.5" y2="430" stroke="#26262a" stroke-width="1"/>
<line x1="1211.6" y1="42" x2="1211.6" y2="430" stroke="#26262a" stroke-width="1"/>
<line x1="945" y1="61.57" x2="1221" y2="61.57" stroke="#26262a" stroke-width="1"/>
<line x1="945" y1="79.53999999999999" x2="1221" y2="79.53999999999999" stroke="#26262a" stroke-width="1"/>
<line x1="945" y1="97.50999999999999" x2="1221" y2="97.50999999999999" stroke="#26262a" stroke-width="1"/>
<line x1="945" y1="115.47999999999999" x2="1221" y2="115.47999999999999" stroke="#26262a" stroke-width="1"/>
<line x1="945" y1="133.45" x2="1221" y2="133.45" stroke="#26262a" stroke-width="1"/>
<line x1="945" y1="151.42" x2="1221" y2="151.42" stroke="#26262a" stroke-width="1"/>
<line x1="945" y1="169.39" x2="1221" y2="169.39" stroke="#26262a" stroke-width="1"/>
<line x1="945" y1="187.35999999999999" x2="1221" y2="187.35999999999999" stroke="#26262a" stroke-width="1"/>
<line x1="945" y1="205.32999999999998" x2="1221" y2="205.32999999999998" stroke="#26262a" stroke-width="1"/>
<line x1="945" y1="223.29999999999998" x2="1221" y2="223.29999999999998" stroke="#26262a" stroke-width="1"/>
<line x1="945" y1="241.26999999999998" x2="1221" y2="241.26999999999998" stroke="#26262a" stroke-width="1"/>
<line x1="945" y1="259.24" x2="1221" y2="259.24" stroke="#26262a" stroke-width="1"/>
<line x1="945" y1="277.21" x2="1221" y2="277.21" stroke="#26262a" stroke-width="1"/>
<line x1="945" y1="295.18" x2="1221" y2="295.18" stroke="#26262a" stroke-width="1"/>
<line x1="945" y1="313.15" x2="1221" y2="313.15" stroke="#26262a" stroke-width="1"/>
<line x1="945" y1="331.12" x2="1221" y2="331.12" stroke="#26262a" stroke-width="1"/>
<line x1="945" y1="349.09000000000003" x2="1221" y2="349.09000000000003" stroke="#26262a" stroke-width="1"/>
<line x1="945" y1="367.06" x2="1221" y2="367.06" stroke="#26262a" stroke-width="1"/>
<line x1="945" y1="385.03" x2="1221" y2="385.03" stroke="#26262a" stroke-width="1"/>
<line x1="945" y1="403.0" x2="1221" y2="403.0" stroke="#26262a" stroke-width="1"/>
<line x1="945" y1="420.97" x2="1221" y2="420.97" stroke="#26262a" stroke-width="1"/>
<rect x="945.20" y="317.5" width="6.88" height="112.0" fill="#000"/>
<rect x="952.09" y="302.8" width="6.88" height="126.7" fill="#000"/>
<rect x="958.97" y="286.1" width="6.88" height="143.4" fill="#000"/>
<rect x="965.86" y="267.0" width="6.88" height="162.5" fill="#000"/>
<rect x="972.74" y="247.0" width="6.88" height="182.5" fill="#000"/>
<rect x="979.62" y="225.6" width="6.88" height="203.9" fill="#000"/>
<rect x="986.51" y="206.0" width="6.88" height="223.5" fill="#000"/>
<rect x="993.40" y="189.4" width="6.88" height="240.1" fill="#000"/>
<rect x="1000.28" y="177.1" width="6.88" height="252.4" fill="#000"/>
<rect x="1007.17" y="170.3" width="6.88" height="259.2" fill="#000"/>
<rect x="1014.05" y="170.3" width="6.88" height="259.2" fill="#000"/>
<rect x="1020.94" y="177.1" width="6.88" height="252.4" fill="#000"/>
<rect x="1027.82" y="189.4" width="6.88" height="240.1" fill="#000"/>
<rect x="1034.71" y="204.8" width="6.88" height="224.7" fill="#000"/>
<rect x="1041.59" y="223.2" width="6.88" height="206.3" fill="#000"/>
<rect x="1048.48" y="242.0" width="6.88" height="187.5" fill="#000"/>
<rect x="1055.36" y="260.0" width="6.88" height="169.5" fill="#000"/>
<rect x="1062.25" y="276.3" width="6.88" height="153.2" fill="#000"/>
<rect x="1069.13" y="291.0" width="6.88" height="138.5" fill="#000"/>
<rect x="1076.02" y="303.8" width="6.88" height="125.7" fill="#000"/>
<rect x="1082.90" y="313.9" width="6.88" height="115.6" fill="#000"/>
<rect x="1089.79" y="321.2" width="6.88" height="108.3" fill="#000"/>
<rect x="1096.67" y="323.7" width="6.88" height="105.8" fill="#000"/>
<rect x="1103.56" y="318.3" width="6.88" height="111.2" fill="#000"/>
<rect x="1110.44" y="304.1" width="6.88" height="125.4" fill="#000"/>
<rect x="1117.33" y="280.8" width="6.88" height="148.7" fill="#000"/>
<rect x="1124.21" y="253.9" width="6.88" height="175.6" fill="#000"/>
<rect x="1131.10" y="230.1" width="6.88" height="199.4" fill="#000"/>
<rect x="1137.98" y="216.7" width="6.88" height="212.8" fill="#000"/>
<rect x="1144.87" y="217.6" width="6.88" height="211.9" fill="#000"/>
<rect x="1151.75" y="232.3" width="6.88" height="197.2" fill="#000"/>
<rect x="1158.63" y="255.1" width="6.88" height="174.4" fill="#000"/>
<rect x="1165.52" y="278.9" width="6.88" height="150.6" fill="#000"/>
<rect x="1172.40" y="299.9" width="6.88" height="129.6" fill="#000"/>
<rect x="1179.29" y="315.6" width="6.88" height="113.9" fill="#000"/>
<rect x="1186.17" y="326.9" width="6.88" height="102.6" fill="#000"/>
<rect x="1193.06" y="335.2" width="6.88" height="94.3" fill="#000"/>
<rect x="1199.94" y="340.8" width="6.88" height="88.7" fill="#000"/>
<rect x="1206.83" y="343.3" width="6.88" height="86.2" fill="#000"/>
<rect x="1213.71" y="343.8" width="6.88" height="85.7" fill="#000"/>
<rect x="946.00" y="317.5" width="5.1" height="112.0" fill="url(#g0)"/>
<rect x="952.88" y="302.8" width="5.1" height="126.7" fill="url(#g1)"/>
<rect x="959.77" y="286.1" width="5.1" height="143.4" fill="url(#g2)"/>
<rect x="966.65" y="267.0" width="5.1" height="162.5" fill="url(#g3)"/>
<rect x="973.54" y="247.0" width="5.1" height="182.5" fill="url(#g4)"/>
<rect x="980.42" y="225.6" width="5.1" height="203.9" fill="url(#g5)"/>
<rect x="987.31" y="206.0" width="5.1" height="223.5" fill="url(#g6)"/>
<rect x="994.20" y="189.4" width="5.1" height="240.1" fill="url(#g7)"/>
<rect x="1001.08" y="177.1" width="5.1" height="252.4" fill="url(#g8)"/>
<rect x="1007.97" y="170.3" width="5.1" height="259.2" fill="url(#g9)"/>
<rect x="1014.85" y="170.3" width="5.1" height="259.2" fill="url(#g10)"/>
<rect x="1021.74" y="177.1" width="5.1" height="252.4" fill="url(#g11)"/>
<rect x="1028.62" y="189.4" width="5.1" height="240.1" fill="url(#g12)"/>
<rect x="1035.51" y="204.8" width="5.1" height="224.7" fill="url(#g13)"/>
<rect x="1042.39" y="223.2" width="5.1" height="206.3" fill="url(#g14)"/>
<rect x="1049.28" y="242.0" width="5.1" height="187.5" fill="url(#g15)"/>
<rect x="1056.16" y="260.0" width="5.1" height="169.5" fill="url(#g16)"/>
<rect x="1063.05" y="276.3" width="5.1" height="153.2" fill="url(#g17)"/>
<rect x="1069.93" y="291.0" width="5.1" height="138.5" fill="url(#g18)"/>
<rect x="1076.82" y="303.8" width="5.1" height="125.7" fill="url(#g19)"/>
<rect x="1083.70" y="313.9" width="5.1" height="115.6" fill="url(#g20)"/>
<rect x="1090.59" y="321.2" width="5.1" height="108.3" fill="url(#g21)"/>
<rect x="1097.47" y="323.7" width="5.1" height="105.8" fill="url(#g22)"/>
<rect x="1104.36" y="318.3" width="5.1" height="111.2" fill="url(#g23)"/>
<rect x="1111.24" y="304.1" width="5.1" height="125.4" fill="url(#g24)"/>
<rect x="1118.12" y="280.8" width="5.1" height="148.7" fill="url(#g25)"/>
<rect x="1125.01" y="253.9" width="5.1" height="175.6" fill="url(#g26)"/>
<rect x="1131.89" y="230.1" width="5.1" height="199.4" fill="url(#g27)"/>
<rect x="1138.78" y="216.7" width="5.1" height="212.8" fill="url(#g28)"/>
<rect x="1145.66" y="217.6" width="5.1" height="211.9" fill="url(#g29)"/>
<rect x="1152.55" y="232.3" width="5.1" height="197.2" fill="url(#g30)"/>
<rect x="1159.43" y="255.1" width="5.1" height="174.4" fill="url(#g31)"/>
<rect x="1166.32" y="278.9" width="5.1" height="150.6" fill="url(#g32)"/>
<rect x="1173.20" y="299.9" width="5.1" height="129.6" fill="url(#g33)"/>
<rect x="1180.09" y="315.6" width="5.1" height="113.9" fill="url(#g34)"/>
<rect x="1186.97" y="326.9" width="5.1" height="102.6" fill="url(#g35)"/>
<rect x="1193.86" y="335.2" width="5.1" height="94.3" fill="url(#g36)"/>
<rect x="1200.74" y="340.8" width="5.1" height="88.7" fill="url(#g37)"/>
<rect x="1207.63" y="343.3" width="5.1" height="86.2" fill="url(#g38)"/>
<rect x="1214.51" y="343.8" width="5.1" height="85.7" fill="url(#g39)"/>
<line x1="945" y1="61.57" x2="1221" y2="61.57" stroke="rgba(0,0,0,0.08)" stroke-width="1"/>
<line x1="945" y1="79.53999999999999" x2="1221" y2="79.53999999999999" stroke="rgba(0,0,0,0.08)" stroke-width="1"/>
<line x1="945" y1="97.50999999999999" x2="1221" y2="97.50999999999999" stroke="rgba(0,0,0,0.08)" stroke-width="1"/>
<line x1="945" y1="115.47999999999999" x2="1221" y2="115.47999999999999" stroke="rgba(0,0,0,0.08)" stroke-width="1"/>
<line x1="945" y1="133.45" x2="1221" y2="133.45" stroke="rgba(0,0,0,0.08)" stroke-width="1"/>
<line x1="945" y1="151.42" x2="1221" y2="151.42" stroke="rgba(0,0,0,0.08)" stroke-width="1"/>
<line x1="945" y1="169.39" x2="1221" y2="169.39" stroke="rgba(0,0,0,0.08)" stroke-width="1"/>
<line x1="945" y1="187.35999999999999" x2="1221" y2="187.35999999999999" stroke="rgba(0,0,0,0.08)" stroke-width="1"/>
<line x1="945" y1="205.32999999999998" x2="1221" y2="205.32999999999998" stroke="rgba(0,0,0,0.08)" stroke-width="1"/>
<line x1="945" y1="223.29999999999998" x2="1221" y2="223.29999999999998" stroke="rgba(0,0,0,0.08)" stroke-width="1"/>
<line x1="945" y1="241.26999999999998" x2="1221" y2="241.26999999999998" stroke="rgba(0,0,0,0.08)" stroke-width="1"/>
<line x1="945" y1="259.24" x2="1221" y2="259.24" stroke="rgba(0,0,0,0.08)" stroke-width="1"/>
<line x1="945" y1="277.21" x2="1221" y2="277.21" stroke="rgba(0,0,0,0.08)" stroke-width="1"/>
<line x1="945" y1="295.18" x2="1221" y2="295.18" stroke="rgba(0,0,0,0.08)" stroke-width="1"/>
<line x1="945" y1="313.15" x2="1221" y2="313.15" stroke="rgba(0,0,0,0.08)" stroke-width="1"/>
<line x1="945" y1="331.12" x2="1221" y2="331.12" stroke="rgba(0,0,0,0.08)" stroke-width="1"/>
<line x1="945" y1="349.09000000000003" x2="1221" y2="349.09000000000003" stroke="rgba(0,0,0,0.08)" stroke-width="1"/>
<line x1="945" y1="367.06" x2="1221" y2="367.06" stroke="rgba(0,0,0,0.08)" stroke-width="1"/>
<line x1="945" y1="385.03" x2="1221" y2="385.03" stroke="rgba(0,0,0,0.08)" stroke-width="1"/>
<line x1="945" y1="403.0" x2="1221" y2="403.0" stroke="rgba(0,0,0,0.08)" stroke-width="1"/>
<line x1="945" y1="420.97" x2="1221" y2="420.97" stroke="rgba(0,0,0,0.08)" stroke-width="1"/>
<polyline points="946,288.5 947,287.9 948,287.2 949,286.5 950,285.7 951,284.9 952,284.1 953,283.2 954,282.3 955,281.4 956,280.4 957,279.3 958,278.3 959,277.2 960,276.0 961,274.8 962,273.6 963,272.3 964,271.0 965,269.6 966,268.2 967,266.8 968,265.3 969,263.8 970,262.3 971,260.7 972,259.1 973,257.5 974,255.8 975,254.2 976,252.5 977,250.7 978,249.0 979,247.3 980,245.5 981,243.7 982,241.9 983,240.2 984,238.4 985,236.6 986,234.9 987,233.1 988,231.4 989,229.7 990,228.0 991,226.4 992,224.8 993,223.2 994,221.7 995,220.2 996,218.8 997,217.4 998,216.1 999,214.8 1000,213.6 1001,212.5 1002,211.4 1003,210.4 1004,209.5 1005,208.7 1006,207.9 1007,207.2 1008,206.6 1009,206.1 1010,205.7 1011,205.4 1012,205.2 1013,205.0 1014,205.0 1015,205.0 1016,205.2 1017,205.4 1018,205.7 1019,206.1 1020,206.6 1021,207.2 1022,207.9 1023,208.7 1024,209.5 1025,210.4 1026,211.4 1027,212.5 1028,213.6 1029,214.8 1030,216.1 1031,217.4 1032,218.8 1033,220.2 1034,221.7 1035,223.2 1036,224.8 1037,226.4 1038,228.0 1039,229.7 1040,231.4 1041,233.1 1042,234.9 1043,236.6 1044,238.4 1045,240.2 1046,241.9 1047,243.7 1048,245.5 1049,247.3 1050,249.0 1051,250.7 1052,252.5 1053,254.2 1054,255.8 1055,257.5 1056,259.1 1057,260.7 1058,262.3 1059,263.8 1060,265.3 1061,266.8 1062,268.2 1063,269.6 1064,271.0 1065,272.3 1066,273.6 1067,274.8 1068,276.0 1069,277.1 1070,278.2 1071,279.3 1072,280.3 1073,281.3 1074,282.2 1075,283.1 1076,284.0 1077,284.8 1078,285.6 1079,286.3 1080,287.0 1081,287.6 1082,288.2 1083,288.8 1084,289.3 1085,289.8 1086,290.2 1087,290.6 1088,291.0 1089,291.2 1090,291.5 1091,291.7 1092,291.8 1093,291.9 1094,292.0 1095,292.0 1096,291.9 1097,291.7 1098,291.5 1099,291.2 1100,290.9 1101,290.5 1102,290.0 1103,289.4 1104,288.7 1105,288.0 1106,287.1 1107,286.2 1108,285.1 1109,284.0 1110,282.8 1111,281.4 1112,280.0 1113,278.5 1114,276.8 1115,275.1 1116,273.3 1117,271.4 1118,269.5 1119,267.4 1120,265.3 1121,263.2 1122,261.0 1123,258.7 1124,256.5 1125,254.2 1126,251.9 1127,249.7 1128,247.5 1129,245.3 1130,243.2 1131,241.2 1132,239.2 1133,237.4 1134,235.7 1135,234.2 1136,232.8 1137,231.5 1138,230.5 1139,229.6 1140,228.9 1141,228.4 1142,228.1 1143,228.0 1144,228.1 1145,228.4 1146,228.9 1147,229.6 1148,230.5 1149,231.6 1150,232.8 1151,234.2 1152,235.8 1153,237.5 1154,239.3 1155,241.3 1156,243.3 1157,245.4 1158,247.6 1159,249.8 1160,252.1 1161,254.4 1162,256.7 1163,259.0 1164,261.2 1165,263.5 1166,265.7 1167,267.8 1168,269.9 1169,271.9 1170,273.9 1171,275.7 1172,277.5 1173,279.2 1174,280.8 1175,282.3 1176,283.7 1177,285.1 1178,286.3 1179,287.5 1180,288.5 1181,289.5 1182,290.4 1183,291.2 1184,292.0 1185,292.7 1186,293.3 1187,293.9 1188,294.4 1189,294.8 1190,295.2 1191,295.6 1192,295.9 1193,296.2 1194,296.4 1195,296.7 1196,296.8 1197,297.0 1198,297.2 1199,297.3 1200,297.4 1201,297.5 1202,297.6 1203,297.6 1204,297.7 1205,297.7 1206,297.8 1207,297.8 1208,297.9 1209,297.9 1210,297.9 1211,297.9 1212,297.9 1213,297.9 1214,298.0 1215,298.0 1216,298.0 1217,298.0 1218,298.0 1219,298.0 1220,298.0" fill="none" stroke="#1c6049" stroke-width="1.6"/>
</g></svg>

<!-- PLAYER -->
<div id="player">
  <div class="t" style="left:30px;top:9.2px;font-size:13.1px;color:#8a8a90">0:00</div>
  <div class="abs" style="left:64px;top:8px;width:1109px;height:16px;border-radius:8px;background:#2a2a2a"></div>
  <div class="abs" style="left:64px;top:8px;width:16px;height:16px;border-radius:8px;background:#0b0b0d;border:1.5px solid #f0f0f0"></div>
  <div class="t" style="left:1181.4px;top:9.2px;font-size:13.1px;color:#8a8a90">4:00</div>

  <div class="abs" style="left:16px;top:32px;width:48px;height:48px;border-radius:4px;background:linear-gradient(135deg,#10b981,#06b6d4)"></div>
  <svg class="abs" style="left:30px;top:43px" width="20" height="24" viewBox="30 684 20 24"><path d="M36.6 706 Q38.6 706.4 39.3 703 L40.8 694 Q41.5 690.3 43.8 690.5" fill="none" stroke="#fff" stroke-width="1.6" stroke-linecap="round"/></svg>
  <div class="t" style="left:76.5px;top:42.2px;font-size:14.6px;color:#909096">No track selected</div>
  <div class="t" style="left:76.5px;top:60.1px;font-size:12.75px;color:#6e6e74">Select a composition to play</div>

  <svg class="i" style="left:517px;top:48px;color:#a0a0a6;stroke-width:2" width="16" height="16" viewBox="0 0 24 24"><path d="m18 14 4 4-4 4"/><path d="m18 2 4 4-4 4"/><path d="M2 18h1.973a4 4 0 0 0 3.3-1.7l5.454-8.6a4 4 0 0 1 3.3-1.7H22"/><path d="M2 6h1.972a4 4 0 0 1 3.6 2.2"/><path d="M22 18h-6.041a4 4 0 0 1-3.3-1.8l-.359-.45"/></svg>
  <svg class="i" style="left:561px;top:48px;color:#a0a0a6;stroke-width:2" width="16" height="16" viewBox="0 0 24 24"><polygon points="19 20 9 12 19 4 19 20"/><line x1="5" x2="5" y1="19" y2="5"/></svg>
  <div class="abs" style="left:595px;top:32px;width:48px;height:48px;border-radius:24px;background:#868686"></div>
  <svg class="i" style="left:612px;top:48px;color:#161618;stroke-width:2.3" width="16" height="16" viewBox="0 0 24 24"><polygon points="6 3 20 12 6 21 6 3"/></svg>
  <svg class="i" style="left:661px;top:48px;color:#a0a0a6;stroke-width:2" width="16" height="16" viewBox="0 0 24 24"><polygon points="5 4 15 12 5 20 5 4"/><line x1="19" x2="19" y1="5" y2="19"/></svg>
  <svg class="i" style="left:705px;top:48px;color:#a0a0a6;stroke-width:2" width="16" height="16" viewBox="0 0 24 24"><path d="m17 2 4 4-4 4"/><path d="M3 11v-1a4 4 0 0 1 4-4h14"/><path d="m7 22-4-4 4-4"/><path d="M21 13v1a4 4 0 0 1-4 4H3"/></svg>

  <svg class="i" style="left:1030px;top:48px;color:#a0a0a6;stroke-width:2" width="16" height="16" viewBox="0 0 24 24"><path d="M21 15V6"/><path d="M18.5 18a2.5 2.5 0 1 0 0-5 2.5 2.5 0 0 0 0 5Z"/><path d="M12 12H3"/><path d="M16 6H3"/><path d="M12 18H3"/></svg>
  <svg class="i" style="left:1091px;top:48px;color:#a0a0a6;stroke-width:2" width="16" height="16" viewBox="0 0 24 24"><path d="M11 4.702a.705.705 0 0 0-1.203-.498L6.413 7.587A1.4 1.4 0 0 1 5.416 8H3a1 1 0 0 0-1 1v6a1 1 0 0 0 1 1h2.416a1.4 1.4 0 0 1 .997.413l3.383 3.384A.705.705 0 0 0 11 19.298z"/><path d="M16 9a5 5 0 0 1 0 6"/><path d="M19.364 18.364a9 9 0 0 0 0-12.728"/></svg>
  <div class="abs" style="left:1125px;top:48px;width:96px;height:16px;border-radius:8px;background:#2a2a2a"></div>
  <div class="abs" style="left:1125px;top:48px;width:70px;height:16px;border-radius:8px;background:#f5f5f5"></div>
  <div class="abs" style="left:1186px;top:48px;width:16px;height:16px;border-radius:8px;background:#0b0b0d;border:1.5px solid #f0f0f0"></div>
</div>
<div class="abs" style="left:0;top:0;width:1px;height:724px;background:#38383c"></div>
<svg class="abs" style="left:0;top:723px" width="14" height="12" viewBox="0 723 14 12"><path d="M0 723 L0 735 L12 735 A12 12 0 0 1 0 723 Z" fill="#1e2a18"/><path d="M0.5 723 A11.5 11.5 0 0 0 12 734.5" fill="none" stroke="#3a3a3e" stroke-width="1"/></svg>
<svg class="abs" style="left:1222px;top:723px" width="14" height="12" viewBox="1222 723 14 12"><path d="M1236 723 L1236 735 L1224 735 A12 12 0 0 0 1236 723 Z" fill="#1e2a1e"/><path d="M1235.5 723 A11.5 11.5 0 0 1 1224 734.5" fill="none" stroke="#303034" stroke-width="1"/></svg>
</body></html>
